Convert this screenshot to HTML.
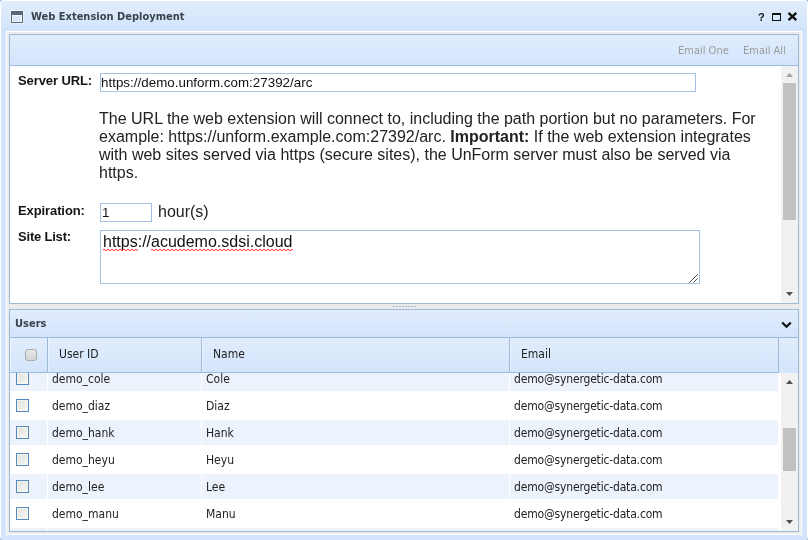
<!DOCTYPE html>
<html lang="en">
<head>
<meta charset="utf-8">
<title>Web Extension Deployment</title>
<style>
html,body{margin:0;padding:0;}
body{width:808px;height:540px;overflow:hidden;position:relative;background:#fff;
  font-family:"DejaVu Sans Condensed","DejaVu Sans","Liberation Sans",sans-serif;font-stretch:condensed;}
.ls{font-family:"Liberation Sans",sans-serif;font-stretch:normal;}
.abs{position:absolute;}
#win{position:absolute;left:-1px;top:-1px;width:810px;height:542px;box-sizing:border-box;
  border:1px solid #a2b1c9;border-radius:4px;background:#d3e4fc;
  box-shadow:inset 1px 1px 0 #fff,inset -1px 0 0 #fff;overflow:hidden;will-change:transform;}
#hdr{position:absolute;left:1px;top:1px;width:806px;height:31px;
  background:linear-gradient(#e2edfc,#d1e3fb);}
#title{position:absolute;left:31px;top:9px;font-size:11px;font-weight:bold;color:#3a434d;
  line-height:15px;white-space:nowrap;}
#frame{position:absolute;left:6px;top:31px;width:796px;height:504px;box-sizing:border-box;
  border:1px solid #fff;background:#ebebeb;}
.panel{position:absolute;left:9px;width:790px;box-sizing:border-box;border:1px solid #9dbad8;background:#fff;overflow:hidden;}
#p1{top:34px;height:270px;}
#p2{top:309px;height:223px;}
#tb{position:absolute;left:0;top:0;width:788px;height:30px;border-bottom:1px solid #9dbad8;
  background:linear-gradient(#e1edfd,#d3e4fb);}
.tbtxt{position:absolute;top:8px;font-size:11px;color:#9b9b9b;line-height:15px;white-space:nowrap;}
.lbl{position:absolute;font-family:"Liberation Sans",sans-serif;font-stretch:normal;font-weight:bold;font-size:13px;color:#151515;white-space:nowrap;line-height:16px;letter-spacing:-0.2px;}
.inp{position:absolute;box-sizing:border-box;border:1px solid #a5c1e6;background:#fff;
  font-family:"Liberation Sans",sans-serif;font-stretch:normal;font-size:13.33px;color:#111;white-space:nowrap;overflow:hidden;}
#desc{position:absolute;left:89px;top:75px;width:670px;font-family:"Liberation Sans",sans-serif;font-stretch:normal;font-size:16px;line-height:18px;color:#222;}
.sbtrack{position:absolute;background:#f1f1f1;width:17px;}
.sbthumb{position:absolute;background:#c1c1c1;width:13px;left:2px;}
#p2h{position:absolute;left:0;top:0;width:788px;height:27px;border-bottom:1px solid #9dbad8;background:linear-gradient(#e1edfd,#d3e4fb);}
#gh{position:absolute;left:0;top:28px;width:788px;height:35px;background:linear-gradient(#e1edfd,#d3e4fb);}
.gc{position:absolute;top:0;height:35px;box-sizing:border-box;border-right:1px solid #9dbad8;border-bottom:1px solid #9dbad8;box-shadow:inset 1px 0 0 rgba(255,255,255,0.45);}
.gct{position:absolute;top:9px;font-size:12px;line-height:15px;color:#222;white-space:nowrap;}
.row{position:absolute;left:0;width:768px;height:27px;}
.row.alt .c{background:#edf3fd;}
.c{position:absolute;top:1px;height:25px;}
.ct{position:absolute;top:6px;left:4px;font-size:12px;line-height:15px;color:#222;white-space:nowrap;}
.ct.em{letter-spacing:-0.17px;}
.cb{position:absolute;left:6px;top:6px;width:13px;height:13px;box-sizing:border-box;border:1px solid #5489bd;
  background:linear-gradient(135deg,#e0e2de,#f7f7f4);box-shadow:inset 0 0 0 1px rgba(252,248,238,0.75);}
</style>
</head>
<body>
<div id="win">
  <div id="hdr"></div>
  <svg class="abs" style="left:10px;top:10px" width="14" height="14" viewBox="0 0 14 14">
    <rect x="0.5" y="0.5" width="13" height="13" fill="none" stroke="#e7f0fd" stroke-width="1"/>
    <rect x="1.5" y="1.5" width="11" height="11" fill="none" stroke="#5a6673" stroke-width="1"/>
    <rect x="1" y="1" width="12" height="4" fill="#5a6673"/>
    <rect x="2.5" y="5.5" width="9" height="6" fill="none" stroke="#f1f7ff" stroke-width="1"/>
  </svg>
  <div id="title">Web Extension Deployment</div>
  <div class="abs" style="left:758px;top:10px;font-family:'Liberation Sans',sans-serif;font-stretch:normal;font-size:11px;font-weight:bold;color:#111;line-height:15px;">?</div>
  <svg class="abs" style="left:772px;top:12.5px" width="9" height="8" viewBox="0 0 9 8">
    <rect x="0.5" y="1" width="8" height="6.5" fill="none" stroke="#111" stroke-width="1"/>
    <rect x="0" y="0" width="9" height="2" fill="#111"/>
  </svg>
  <svg class="abs" style="left:787px;top:12px" width="11" height="9" viewBox="0 0 11 9">
    <path d="M1.5 0.9 L9.3 8.1 M9.3 0.9 L1.5 8.1" stroke="#111" stroke-width="2.4" fill="none"/>
  </svg>

  <div id="frame"></div>

  <div class="panel" id="p1">
    <div id="tb">
      <div class="tbtxt" style="left:668px;">Email One</div>
      <div class="tbtxt" style="left:733px;">Email All</div>
    </div>
    <div class="lbl" style="left:8px;top:38px;letter-spacing:-0.1px;">Server URL:</div>
    <div class="inp" style="left:90px;top:38px;width:596px;height:19px;line-height:17px;padding-left:0;letter-spacing:0.03px;">https://demo.unform.com:27392/arc</div>
    <div id="desc">The URL the web extension will connect to, including the path portion but no parameters. For example: https://unform.example.com:27392/arc. <b>Important:</b> If the web extension integrates with web sites served via https (secure sites), the UnForm server must also be served via https.</div>
    <div class="lbl" style="left:8px;top:168px;letter-spacing:-0.1px;">Expiration:</div>
    <div class="inp" style="left:90px;top:168px;width:52px;height:19px;line-height:17px;padding-left:1px;">1</div>
    <div class="abs" style="left:148px;top:168px;font-family:'Liberation Sans',sans-serif;font-stretch:normal;font-size:16px;line-height:18px;color:#222;">hour(s)</div>
    <div class="lbl" style="left:8px;top:194px;">Site List:</div>
    <div class="inp" style="left:90px;top:195px;width:600px;height:54px;font-size:16px;line-height:18px;padding:2px 0 0 2px;">
      https://acudemo.sdsi.cloud
      <svg class="abs" style="left:2px;top:17px" width="35" height="4" viewBox="0 0 35 4"><path d="M0 2 Q1 0.6 2 2 Q3 3.4 4 2 Q5 0.6 6 2 Q7 3.4 8 2 Q9 0.6 10 2 Q11 3.4 12 2 Q13 0.6 14 2 Q15 3.4 16 2 Q17 0.6 18 2 Q19 3.4 20 2 Q21 0.6 22 2 Q23 3.4 24 2 Q25 0.6 26 2 Q27 3.4 28 2 Q29 0.6 30 2 Q31 3.4 32 2 Q33 0.6 34 2 Q35 3.4 36 2" stroke="#f33" stroke-width="1" fill="none"/></svg>
      <svg class="abs" style="left:50px;top:17px" width="142" height="4" viewBox="0 0 142 4"><path d="M0 2 Q1 0.6 2 2 Q3 3.4 4 2 Q5 0.6 6 2 Q7 3.4 8 2 Q9 0.6 10 2 Q11 3.4 12 2 Q13 0.6 14 2 Q15 3.4 16 2 Q17 0.6 18 2 Q19 3.4 20 2 Q21 0.6 22 2 Q23 3.4 24 2 Q25 0.6 26 2 Q27 3.4 28 2 Q29 0.6 30 2 Q31 3.4 32 2 Q33 0.6 34 2 Q35 3.4 36 2 Q37 0.6 38 2 Q39 3.4 40 2 Q41 0.6 42 2 Q43 3.4 44 2 Q45 0.6 46 2 Q47 3.4 48 2 Q49 0.6 50 2 Q51 3.4 52 2 Q53 0.6 54 2 Q55 3.4 56 2 Q57 0.6 58 2 Q59 3.4 60 2 Q61 0.6 62 2 Q63 3.4 64 2 Q65 0.6 66 2 Q67 3.4 68 2 Q69 0.6 70 2 Q71 3.4 72 2 Q73 0.6 74 2 Q75 3.4 76 2 Q77 0.6 78 2 Q79 3.4 80 2 Q81 0.6 82 2 Q83 3.4 84 2 Q85 0.6 86 2 Q87 3.4 88 2 Q89 0.6 90 2 Q91 3.4 92 2 Q93 0.6 94 2 Q95 3.4 96 2 Q97 0.6 98 2 Q99 3.4 100 2 Q101 0.6 102 2 Q103 3.4 104 2 Q105 0.6 106 2 Q107 3.4 108 2 Q109 0.6 110 2 Q111 3.4 112 2 Q113 0.6 114 2 Q115 3.4 116 2 Q117 0.6 118 2 Q119 3.4 120 2 Q121 0.6 122 2 Q123 3.4 124 2 Q125 0.6 126 2 Q127 3.4 128 2 Q129 0.6 130 2 Q131 3.4 132 2 Q133 0.6 134 2 Q135 3.4 136 2 Q137 0.6 138 2 Q139 3.4 140 2 Q141 0.6 142 2" stroke="#f33" stroke-width="1" fill="none"/></svg>
      <svg class="abs" style="right:1px;bottom:0px" width="9" height="9" viewBox="0 0 9 9"><path d="M0.3 8.7 L8.7 0.3 M4.3 8.7 L8.7 4.3" stroke="#505050" stroke-width="1" fill="none"/></svg>
    </div>
    <div class="sbtrack" style="left:771px;top:31px;height:237px;">
      <svg class="abs" style="left:5px;top:7px" width="7" height="4" viewBox="0 0 7 4"><path d="M0 4 L3.5 0 L7 4 Z" fill="#a3a3a3"/></svg>
      <div class="sbthumb" style="top:17px;height:137px;"></div>
      <svg class="abs" style="left:5px;top:226px" width="7" height="4" viewBox="0 0 7 4"><path d="M0 0 L3.5 4 L7 0 Z" fill="#505050"/></svg>
    </div>
  </div>

  <div class="abs" style="left:393px;top:306px;width:24px;height:1px;background:repeating-linear-gradient(90deg,#9db7d6 0,#9db7d6 2px,transparent 2px,transparent 3px);"></div>

  <div class="panel" id="p2">
    <div id="p2h">
      <div class="abs" style="left:5px;top:6px;font-size:11px;font-weight:bold;color:#3a434d;line-height:15px;">Users</div>
      <svg class="abs" style="left:771px;top:11px" width="11" height="8" viewBox="0 0 11 8"><path d="M1.2 1.5 L5.5 5.8 L9.8 1.5" stroke="#111" stroke-width="2.2" fill="none"/></svg>
    </div>
    <div id="gh">
      <div class="gc" style="left:0;width:38px;">
        <div class="abs" style="left:15px;top:11px;width:12px;height:12px;box-sizing:border-box;border:1px solid #a9a9a9;border-radius:3px;background:linear-gradient(#e9e9e9,#d6d6d6);"></div>
      </div>
      <div class="gc" style="left:38px;width:154px;"><div class="gct" style="left:11px;">User ID</div></div>
      <div class="gc" style="left:192px;width:308px;"><div class="gct" style="left:11px;">Name</div></div>
      <div class="gc" style="left:500px;width:269px;"><div class="gct" style="left:11px;">Email</div></div>
    </div>
    <div class="abs" id="gb" style="left:0;top:63px;width:788px;height:158px;overflow:hidden;background:#fff;">
      <div class="row alt" style="top:-8px;"><div class="c" style="left:0;width:37px;"><div class="cb"></div></div><div class="c" style="left:38px;width:153px;"><div class="ct">demo_cole</div></div><div class="c" style="left:192px;width:307px;"><div class="ct">Cole</div></div><div class="c" style="left:500px;width:268px;"><div class="ct em">demo@synergetic-data.com</div></div></div>
      <div class="row" style="top:19px;"><div class="c" style="left:0;width:37px;"><div class="cb"></div></div><div class="c" style="left:38px;width:153px;"><div class="ct">demo_diaz</div></div><div class="c" style="left:192px;width:307px;"><div class="ct">Diaz</div></div><div class="c" style="left:500px;width:268px;"><div class="ct em">demo@synergetic-data.com</div></div></div>
      <div class="row alt" style="top:46px;"><div class="c" style="left:0;width:37px;"><div class="cb"></div></div><div class="c" style="left:38px;width:153px;"><div class="ct">demo_hank</div></div><div class="c" style="left:192px;width:307px;"><div class="ct">Hank</div></div><div class="c" style="left:500px;width:268px;"><div class="ct em">demo@synergetic-data.com</div></div></div>
      <div class="row" style="top:73px;"><div class="c" style="left:0;width:37px;"><div class="cb"></div></div><div class="c" style="left:38px;width:153px;"><div class="ct">demo_heyu</div></div><div class="c" style="left:192px;width:307px;"><div class="ct">Heyu</div></div><div class="c" style="left:500px;width:268px;"><div class="ct em">demo@synergetic-data.com</div></div></div>
      <div class="row alt" style="top:100px;"><div class="c" style="left:0;width:37px;"><div class="cb"></div></div><div class="c" style="left:38px;width:153px;"><div class="ct">demo_lee</div></div><div class="c" style="left:192px;width:307px;"><div class="ct">Lee</div></div><div class="c" style="left:500px;width:268px;"><div class="ct em">demo@synergetic-data.com</div></div></div>
      <div class="row" style="top:127px;"><div class="c" style="left:0;width:37px;"><div class="cb"></div></div><div class="c" style="left:38px;width:153px;"><div class="ct">demo_manu</div></div><div class="c" style="left:192px;width:307px;"><div class="ct">Manu</div></div><div class="c" style="left:500px;width:268px;"><div class="ct em">demo@synergetic-data.com</div></div></div>
      <div class="row alt" style="top:154px;"><div class="c" style="left:0;width:37px;"><div class="cb"></div></div><div class="c" style="left:38px;width:153px;"><div class="ct">demo_nguyen</div></div><div class="c" style="left:192px;width:307px;"><div class="ct">Nguyen</div></div><div class="c" style="left:500px;width:268px;"><div class="ct em">demo@synergetic-data.com</div></div></div>
      <div class="sbtrack" style="left:771px;top:0;height:158px;">
        <svg class="abs" style="left:5px;top:7px" width="7" height="4" viewBox="0 0 7 4"><path d="M0 4 L3.5 0 L7 4 Z" fill="#505050"/></svg>
        <div class="sbthumb" style="top:55px;height:43px;"></div>
        <svg class="abs" style="left:5px;top:147px" width="7" height="4" viewBox="0 0 7 4"><path d="M0 0 L3.5 4 L7 0 Z" fill="#505050"/></svg>
      </div>
    </div>
  </div>
</div>
</body>
</html>
